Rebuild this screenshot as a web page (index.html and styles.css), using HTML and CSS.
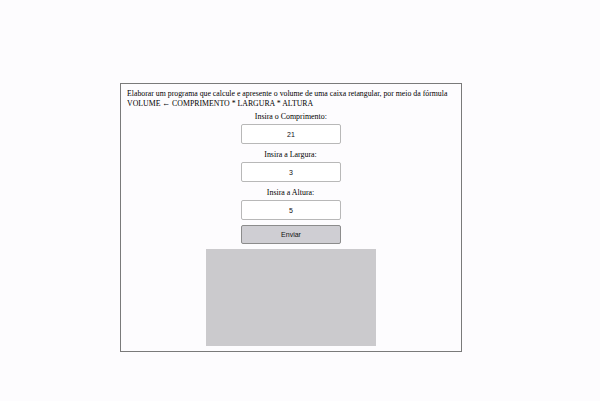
FILE: index.html
```html
<!DOCTYPE html>
<html lang="pt">
<head>
<meta charset="utf-8">
<link rel="stylesheet" href="styles.css">
</head>
<body>
<div class="box">
  <p class="intro">Elaborar um programa que calcule e apresente o volume de uma caixa retangular, por meio da fórmula<br>VOLUME ← COMPRIMENTO * LARGURA * ALTURA</p>
  <form class="form">
    <label class="lbl">Insira o Comprimento:</label>
    <input class="inp" type="text" value="21">
    <label class="lbl">Insira a Largura:</label>
    <input class="inp" type="text" value="3">
    <label class="lbl">Insira a Altura:</label>
    <input class="inp" type="text" value="5">
    <button class="btn" type="button">Enviar</button>
    <div class="result"></div>
  </form>
</div>
</body>
</html>
```
FILE: styles.css
```css
html, body {
  margin: 0;
  padding: 0;
  background: #fdfcfe;
}
body {
  padding: 83px 0 0 120px;
  font-family: "Liberation Serif", "Times New Roman", serif;
  color: #000;
}
.box {
  width: 340px;
  height: 267px;
  border: 1px solid #7a7a7a;
  box-sizing: content-box;
  padding: 0;
}
.intro {
  margin: 4px 0 0 6px;
  font-size: 9.2px;
  line-height: 10px;
  white-space: nowrap;
  transform: scaleX(0.85);
  transform-origin: left top;
}
.form {
  display: flex;
  flex-direction: column;
  align-items: center;
  margin-top: 0;
}
.lbl {
  display: inline-block;
  font-size: 9.2px;
  line-height: 11px;
  margin: 3px 0 2px;
  transform: scaleX(0.86);
}
.lbl ~ .lbl {
  margin-top: 5px;
}
.inp {
  width: 100px;
  height: 20px;
  box-sizing: border-box;
  border: 1px solid #b8b8b8;
  border-radius: 2px;
  background: #fff;
  text-align: center;
  font-family: "Liberation Sans", Arial, sans-serif;
  font-size: 7px;
  color: #111;
  padding: 0;
  margin: 0;
}
.btn {
  margin-top: 5px;
  width: 100px;
  height: 19px;
  box-sizing: border-box;
  border: 1px solid #8c8c8c;
  border-radius: 2px;
  background: #cfced3;
  font-family: "Liberation Sans", Arial, sans-serif;
  font-size: 7px;
  color: #111;
  padding: 0;
}
.result {
  margin-top: 5px;
  width: 170px;
  height: 97px;
  background: #cbcacd;
  margin-left: -1px;
}
```
